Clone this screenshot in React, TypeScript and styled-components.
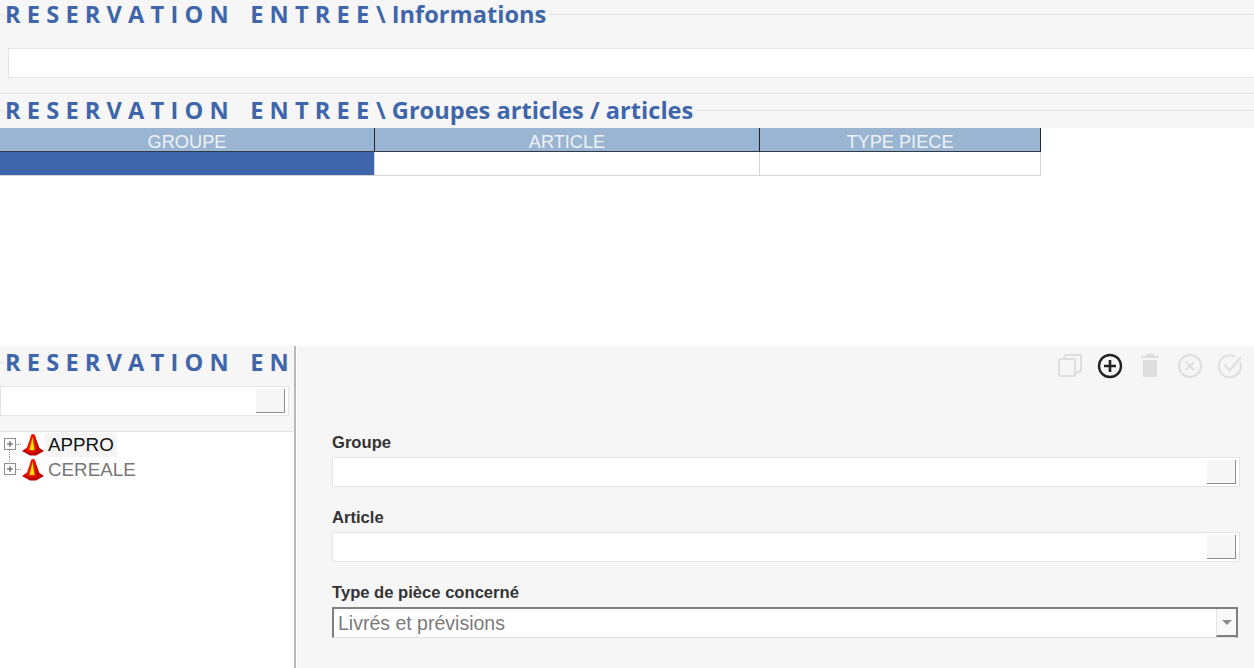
import styled, { createGlobalStyle } from 'styled-components';

const GlobalStyle = createGlobalStyle`
    html, body {
        margin: 0;
        padding: 0;
        background: #fff;
        overflow: hidden;
    }
    body {
        font-family: "Liberation Sans", Arial, sans-serif;
    }
`;

const BLUE = '#3f66ab';
const PANEL = '#f6f6f6';

const Cone = () => (
    <svg width="22" height="22" viewBox="0 0 22 22">
        <path d="M0 17 L6 13 L16 13 L22 17 L14 21.5 L8 21.5 Z" fill="#c10000" />
        <path d="M11 0 C13 0 13.5 2 14 5 L18 16 C15 19 7 19 4 16 L8 5 C8.5 2 9 0 11 0 Z" fill="#ee1800" />
        <path d="M13 2 C13.5 3 14 5 14 5 L18 16 C17 17 15.5 17.6 14 18 Z" fill="#c40d00" />
        <path d="M10.5 3 L12.5 16 L7.5 16 Z" fill="#ffe600" />
    </svg>
);

const Expander = ({ connect }: { connect: 'up' | 'down' }) => (
    <svg width="18" height="25" viewBox="0 0 18 25">
        <path
            d={connect === 'down' ? 'M5.5 18 V25 M12 12.5 H18' : 'M5.5 0 V6 M12 12.5 H18'}
            stroke="#8f8f8f"
            strokeDasharray="1 1"
        />
        <rect x="0.5" y="6.5" width="11" height="11" fill="#fff" stroke="#8f8f8f" />
        <path d="M3 12 H9 M6 9 V15" stroke="#444" />
    </svg>
);

const CopyIcon = () => (
    <svg width="26" height="26" viewBox="0 0 26 26" fill="none" stroke="#dedede" strokeWidth="2">
        <rect x="2" y="6" width="16" height="17" rx="1.5" />
        <path d="M6 6 L9 2 H24 V18 L18 20" />
    </svg>
);

const PlusIcon = () => (
    <svg width="26" height="26" viewBox="0 0 26 26" fill="none" stroke="#222">
        <circle cx="13" cy="13" r="11" strokeWidth="2.4" />
        <path d="M7 13 H19 M13 7 V19" strokeWidth="2.6" />
    </svg>
);

const TrashIcon = () => (
    <svg width="20" height="26" viewBox="0 0 20 26" fill="#dedede">
        <rect x="1" y="3" width="18" height="2" />
        <rect x="6" y="1" width="8" height="2" />
        <path d="M3 7 H17 V24 H3 Z" />
    </svg>
);

const CancelIcon = () => (
    <svg width="26" height="26" viewBox="0 0 26 26" fill="none" stroke="#dedede" strokeWidth="2">
        <circle cx="13" cy="13" r="11" />
        <path d="M9 9 L17 17 M17 9 L9 17" />
    </svg>
);

const CheckIcon = () => (
    <svg width="26" height="26" viewBox="0 0 26 26" fill="none" stroke="#dedede" strokeWidth="2">
        <path d="M23 9 A11 11 0 1 1 18 3.5" />
        <path d="M7.5 12 L12.5 17.5 L24 4" />
    </svg>
);

const App = () => {
    return (
        <Page>
            <GlobalStyle />
            <TopPanel>
                <SectionHeader>
                    <Title>
                        <Spaced>RESERVATION ENTREE</Spaced>\ Informations
                    </Title>
                </SectionHeader>
                <InfoRow>
                    <InfoInput />
                </InfoRow>
                <SectionHeader $second>
                    <Title>
                        <Spaced>RESERVATION ENTREE</Spaced>\ Groupes articles / articles
                    </Title>
                </SectionHeader>
            </TopPanel>

            <Table>
                <HeadCell>GROUPE</HeadCell>
                <HeadCell>ARTICLE</HeadCell>
                <HeadCell>TYPE PIECE</HeadCell>
                <BodyCell $selected />
                <BodyCell />
                <BodyCell />
            </Table>

            <Bottom>
                <LeftPane>
                    <LeftHead>
                        <LeftHeader>
                            <Title>
                                <Spaced>RESERVATION ENTREE</Spaced>
                            </Title>
                        </LeftHeader>
                        <SearchBox>
                            <PickButton />
                        </SearchBox>
                    </LeftHead>
                    <Tree>
                        <TreeRow>
                            <Expander connect="down" />
                            <Cone />
                            <TreeLabel $active>APPRO</TreeLabel>
                        </TreeRow>
                        <TreeRow>
                            <Expander connect="up" />
                            <Cone />
                            <TreeLabel>CEREALE</TreeLabel>
                        </TreeRow>
                    </Tree>
                </LeftPane>
                <RightPane>
                    <Toolbar>
                        <CopyIcon />
                        <PlusIcon />
                        <TrashSlot>
                            <TrashIcon />
                        </TrashSlot>
                        <CancelIcon />
                        <CheckIcon />
                    </Toolbar>
                    <Form>
                        <Field>
                            <Label>Groupe</Label>
                            <InputBox>
                                <PickButton />
                            </InputBox>
                        </Field>
                        <Field>
                            <Label>Article</Label>
                            <InputBox>
                                <PickButton />
                            </InputBox>
                        </Field>
                        <Field>
                            <Label>Type de pièce concerné</Label>
                            <SelectBox>
                                <SelectValue>Livrés et prévisions</SelectValue>
                                <SelectArrow />
                            </SelectBox>
                        </Field>
                    </Form>
                </RightPane>
            </Bottom>
        </Page>
    );
};

export default App;

const Page = styled.div`
    width: 1254px;
    height: 668px;
    display: flex;
    flex-direction: column;
    overflow: hidden;
    background: #fff;
`;

const TopPanel = styled.div`
    height: 128px;
    flex: none;
    background: ${PANEL};
    display: flex;
    flex-direction: column;
`;

const SectionHeader = styled.div<{ $second?: boolean }>`
    height: 28px;
    box-sizing: content-box;
    display: flex;
    align-items: center;
    padding-bottom: ${p => (p.$second ? '4px' : '0')};
    padding-top: ${p => (p.$second ? '2px' : '0')};
    border-top: ${p => (p.$second ? '1px solid #e2e2e2' : 'none')};
    &::before {
        content: "";
        flex: none;
        width: 4px;
        height: 1px;
        margin-right: 1px;
        background: #dfdfdf;
    }
    &::after {
        content: "";
        flex: 1;
        height: 1px;
        margin-left: 3px;
        background: #dfdfdf;
    }
`;

const Title = styled.div`
    flex: none;
    font-family: "Open Sans", sans-serif;
    font-weight: 700;
    font-size: 23.6px;
    line-height: 28px;
    color: ${BLUE};
    white-space: nowrap;
`;

const Spaced = styled.span`
    letter-spacing: 6.2px;
    word-spacing: 3px;
    margin-right: 0.5px;
`;

const InfoRow = styled.div`
    height: 65px;
    flex: none;
    box-sizing: border-box;
    padding: 20px 0 15px 8px;
`;

const InfoInput = styled.div`
    height: 30px;
    box-sizing: border-box;
    background: #fff;
    border: 1px solid #e4e4e4;
    border-right: none;
`;

const Table = styled.div`
    display: grid;
    grid-template-columns: 375px 385px 281px;
    grid-template-rows: 24px 24px;
    width: 1041px;
    flex: none;
`;

const HeadCell = styled.div`
    box-sizing: border-box;
    background: #9ab5d2;
    color: #eef2f7;
    font-size: 18.2px;
    line-height: 28px;
    text-align: center;
    border-right: 1px solid #1c2733;
    border-bottom: 1px solid #2e3a46;
    overflow: hidden;
`;

const BodyCell = styled.div<{ $selected?: boolean }>`
    box-sizing: border-box;
    background: ${p => (p.$selected ? BLUE : '#fff')};
    border-right: 1px solid #d4d4d4;
    border-bottom: 1px solid #d4d4d4;
`;

const Bottom = styled.div`
    margin-top: 170px;
    flex: 1;
    display: flex;
    min-height: 0;
`;

const LeftPane = styled.div`
    width: 294px;
    flex: none;
    display: flex;
    flex-direction: column;
    border-right: 2px solid #b9b9b9;
    overflow: hidden;
`;

const LeftHead = styled.div`
    height: 86px;
    flex: none;
    background: ${PANEL};
    border-bottom: 1px solid #e2e2e2;
    box-sizing: border-box;
`;

const LeftHeader = styled.div`
    height: 40px;
    box-sizing: border-box;
    padding-bottom: 8px;
    display: flex;
    align-items: center;
    &::before {
        content: "";
        flex: none;
        width: 4px;
        height: 1px;
        margin-right: 1px;
        background: #dfdfdf;
    }
`;

const SearchBox = styled.div`
    width: 289px;
    height: 30px;
    box-sizing: border-box;
    background: #fff;
    border: 1px solid #e4e4e4;
    display: flex;
    justify-content: flex-end;
    align-items: center;
    padding-right: 3px;
`;

const PickButton = styled.div`
    width: 29px;
    height: 24px;
    box-sizing: border-box;
    background: ${PANEL};
    border-right: 1px solid #8e8e8e;
    border-bottom: 1px solid #8e8e8e;
`;

const Tree = styled.div`
    flex: 1;
    padding-left: 4px;
    background: #fff;
`;

const TreeRow = styled.div`
    height: 25px;
    display: flex;
    align-items: center;
`;

const TreeLabel = styled.span<{ $active?: boolean }>`
    font-size: 18.8px;
    line-height: 24px;
    padding: 0 3px;
    margin-left: 1px;
    color: ${p => (p.$active ? '#111' : '#777')};
    background: ${p => (p.$active ? '#f5f5f5' : 'transparent')};
`;

const RightPane = styled.div`
    flex: 1;
    background: ${PANEL};
    display: flex;
    flex-direction: column;
    padding: 0 14px 0 35px;
    margin-left: 1px;
`;

const Toolbar = styled.div`
    height: 40px;
    display: flex;
    align-items: center;
    justify-content: flex-end;
    gap: 14px;
    margin: 0 -3px 47px 0;
`;

const TrashSlot = styled.div`
    display: flex;
    margin: 0 3px;
`;

const Form = styled.div`
    display: flex;
    flex-direction: column;
    gap: 21px;
`;

const Field = styled.div`
    display: flex;
    flex-direction: column;
    gap: 4px;
`;

const Label = styled.div`
    font-size: 16.6px;
    font-weight: 700;
    line-height: 20px;
    color: #333;
`;

const InputBox = styled.div`
    height: 30px;
    box-sizing: border-box;
    background: #fff;
    border: 1px solid #e4e4e4;
    display: flex;
    justify-content: flex-end;
    align-items: center;
    padding-right: 3px;
`;

const SelectBox = styled.div`
    height: 31px;
    margin-right: 2px;
    box-sizing: border-box;
    background: #fff;
    border: 2px solid #808080;
    border-bottom: 1px solid #e0e0e0;
    display: flex;
    align-items: center;
`;

const SelectValue = styled.span`
    flex: 1;
    padding-left: 4px;
    font-size: 19.5px;
    color: #7b7b7b;
`;

const SelectArrow = styled.div`
    width: 20px;
    height: 100%;
    box-sizing: border-box;
    background: #f8f8f8;
    border-bottom: 2px solid #808080;
    border-left: 1px solid #e4e4e4;
    display: flex;
    align-items: center;
    justify-content: center;
    &::before {
        content: "";
        border-left: 5px solid transparent;
        border-right: 5px solid transparent;
        border-top: 5px solid #8a8a8a;
    }
`;
